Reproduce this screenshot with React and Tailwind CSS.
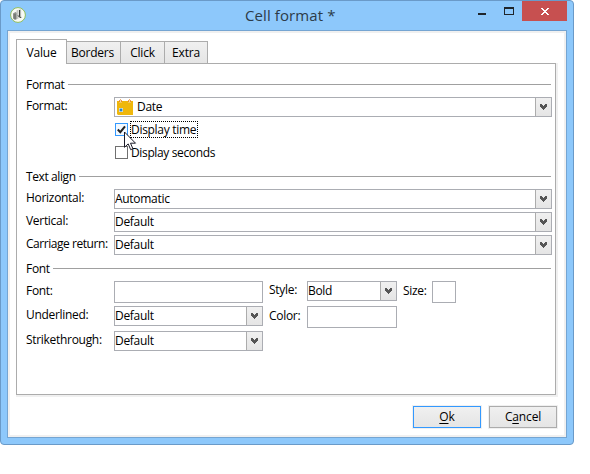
import React from "react";

function Chevron() {
  return (
    <svg width="7" height="6" viewBox="0 0 7 6" fill="#555" shapeRendering="crispEdges">
      <path d="M0 0h2v1h1v1h1v-1h1v-1h2v3h-1v1h-1v1h-1v1h-1v-1h-1v-1h-1v-1h-1z" />
    </svg>
  );
}

function Select({ value, icon, className }) {
  return (
    <div className={"flex h-5 shrink-0 border border-[#abadb3] bg-white " + className}>
      <div className="flex flex-1 items-center leading-[18px]">
        {icon}
        <span>{value}</span>
      </div>
      <div className="flex w-4 items-center justify-center border-l border-[#acacac] bg-linear-to-b from-[#f0f0f0] to-[#e5e5e5]">
        <Chevron />
      </div>
    </div>
  );
}

function Box({ className }) {
  return <div className={"h-[22px] shrink-0 border border-[#abadb3] bg-white " + className} />;
}

function Section({ title, className }) {
  return (
    <div className={"mr-1 flex h-[17px] items-center gap-[3px] " + className}>
      <span className="leading-[17px]">{title}</span>
      <div className="h-px flex-1 bg-[#a0a0a0]" />
    </div>
  );
}

function Label({ children, className = "" }) {
  return <div className={"w-[88px] shrink-0 whitespace-nowrap leading-[18px] " + className}>{children}</div>;
}

function DateIcon() {
  return (
    <svg className="ml-0.5 mr-1" width="16" height="16" viewBox="0 0 16 16">
      <path d="M0 2h16v14H1L0 15z" fill="#efb70c" />
      <path d="M2 1.2h3v2.3H2zM11 1.2h3v2.3h-3z" fill="#f7d9a0" />
      <path d="M2.5 3V1.5Q3.5-.2 4.5 1.5V3M11.5 3V1.5Q12.5-.2 13.5 1.5V3" fill="none" stroke="#e5882f" />
      <path d="M2 9h4v4H2z" fill="#d9e3df" />
      <path d="M2.7 9.7h2.6v2.6H2.7z" fill="#2585cf" />
    </svg>
  );
}

function AppIcon() {
  return (
    <svg width="16" height="16" viewBox="0 0 16 16">
      <circle cx="8" cy="8" r="7.4" fill="#f8faf5" stroke="#8fbd5a" />
      <path d="M3 6.5l2.5-1.5 1.5 1v6l-2 1-2-1.5z" fill="#8d908b" />
      <path d="M6.5 3.5l2-1v9l-2 .8z" fill="#c2c4c0" />
      <path d="M9.5 2.5h1.6v7.5H9.5z" fill="#b5b8b2" />
      <path d="M9.5 3v6.8M8 8.4l1.7 2h1.6" stroke="#3c403b" fill="none" />
      <path d="M5 7v5" stroke="#656965" />
    </svg>
  );
}

export default function App() {
  return (
    <div className="h-[474px] w-[590px] overflow-hidden bg-white font-['Open_Sans','Noto_Sans',sans-serif] text-[12px] tracking-[-0.3px] text-black">
      <div className="flex h-[445px] w-[574px] flex-col rounded-[4px] border border-[#6a9ac8] bg-[#8dc8fb] px-1.5 pb-1.5">
        <div className="flex h-[29px] shrink-0 items-start">
          <div className="ml-[3px] mt-1.5 w-4"><AppIcon /></div>
          <div className="ml-[219px] flex-1 whitespace-nowrap text-[15px] leading-[29px] tracking-[0.1px] text-[#2c3b48]">Cell format *</div>
          <div className="mr-[18px] mt-3 h-0.5 w-2 bg-[#1f252b]" />
          <div className="mr-2 mt-1.5 h-2 w-2.5 border border-t-2 border-[#1f252b]" />
          <div className="flex h-5 w-[45px] items-center justify-center bg-[#c75050]">
            <svg width="8" height="7" viewBox="0 0 8 7" fill="#fff" shapeRendering="crispEdges">
              <path d="M0 0h2v1h1v1h2v-1h1v-1h2v1h-1v1h-1v1h-1v1h1v1h1v1h1v1h-2v-1h-1v-1h-2v1h-1v1h-2v-1h1v-1h1v-1h1v-1h-1v-1h-1v-1h-1z" />
            </svg>
          </div>
        </div>

        <div className="flex flex-1 flex-col border border-[#75a5d2] bg-white">
          <div className="flex flex-1 flex-col border-2 border-[#f0f0f0] pl-1.5 pr-[7px] pt-1.5">
            <div className="z-10 -mb-px flex items-end tracking-[-0.2px]">
              <div className="flex h-[25px] w-[51px] justify-center border border-b-0 border-[#acacac] bg-white leading-[25px]">Value</div>
              <div className="-ml-px flex h-[23px] w-[55px] justify-center border border-[#acacac] bg-linear-to-b from-[#f0f0f0] to-[#e5e5e5] pr-0.5 leading-[21px]">Borders</div>
              <div className="flex h-[23px] w-11 justify-center border border-l-0 border-[#acacac] bg-linear-to-b from-[#f0f0f0] to-[#e5e5e5] leading-[21px]">Click</div>
              <div className="flex h-[23px] w-[43px] justify-center border border-l-0 border-[#acacac] bg-linear-to-b from-[#f0f0f0] to-[#e5e5e5] leading-[21px]">Extra</div>
            </div>

            <div className="h-[332px] w-[540px] shrink-0 border border-[#acacac] bg-white pl-[9px] shadow-[1px_1px_0_1px_#f0f0f0]">
              <Section title="Format" className="mt-3" />
              <div className="mt-1 flex h-5">
                <Label>Format:</Label>
                <Select value="Date" icon={<DateIcon />} className="w-[438px]" />
              </div>

              <div className="relative ml-[89px] mt-1 flex h-[17px] items-center">
                <div className="flex h-[13px] w-[13px] items-center justify-center border border-[#3399ff] bg-[#f3f9ff]">
                  <svg width="9" height="9" viewBox="0 0 9 9">
                    <path d="M.8 4.5l2.5 2.7L8 1.3" fill="none" stroke="#212121" strokeWidth="2" />
                  </svg>
                </div>
                <div className="ml-0.5 flex h-[17px] w-[68px] whitespace-nowrap border border-dotted border-black leading-[15px]">Display time</div>
                <svg className="absolute left-[9px] top-[10px]" width="13" height="20" viewBox="0 0 13 20">
                  <path d="M.5 1v15.3l3.7-3.4 2.5 5.8 2.2-1-2.4-5.5h5z" fill="#fff" stroke="#1b1b28" />
                </svg>
              </div>
              <div className="ml-[89px] mt-1.5 flex h-[17px] items-center">
                <div className="h-[13px] w-[13px] border border-[#707070] bg-white" />
                <div className="ml-[3px] leading-[17px] tracking-[-0.36px]">Display seconds</div>
              </div>

              <Section title="Text align" className="mt-[7px] tracking-[-0.4px]" />
              <div className="mt-1 flex h-5">
                <Label>Horizontal:</Label>
                <Select value="Automatic" className="w-[438px]" />
              </div>
              <div className="mt-[3px] flex h-5">
                <Label>Vertical:</Label>
                <Select value="Default" className="w-[438px]" />
              </div>
              <div className="mt-[3px] flex h-5">
                <Label className="tracking-[-0.45px]">Carriage return:</Label>
                <Select value="Default" className="w-[438px]" />
              </div>

              <Section title="Font" className="mt-[5px]" />
              <div className="mt-1 flex h-[22px]">
                <Label className="pt-px">Font:</Label>
                <Box className="w-[149px]" />
                <div className="ml-1.5 w-[38px] leading-[18px]">Style:</div>
                <Select value="Bold" className="w-[90px]" />
                <div className="ml-1.5 w-[29px] pt-px leading-[18px]">Size:</div>
                <Box className="w-6" />
              </div>
              <div className="mt-[3px] flex h-[22px]">
                <Label>Underlined:</Label>
                <Select value="Default" className="w-[149px]" />
                <div className="ml-1.5 w-[38px] pt-px leading-[18px]">Color:</div>
                <Box className="w-[90px]" />
              </div>
              <div className="mt-[3px] flex h-5">
                <Label>Strikethrough:</Label>
                <Select value="Default" className="w-[149px]" />
              </div>
            </div>

            <div className="mt-[11px] flex justify-end gap-2 tracking-[-0.15px]">
              <div className="flex h-[22px] w-[68px] justify-center border border-[#3399ff] bg-linear-to-b from-[#f0f0f0] to-[#e5e5e5] leading-5 shadow-[0_0_0_1px_#f0f0f0]">
                <span className="underline underline-offset-2">O</span>k
              </div>
              <div className="flex h-[22px] w-[68px] justify-center border border-[#acacac] bg-linear-to-b from-[#f0f0f0] to-[#e5e5e5] leading-5 shadow-[0_0_0_1px_#f0f0f0]">
                C<span className="underline underline-offset-2">a</span>ncel
              </div>
            </div>
          </div>
        </div>
      </div>
    </div>
  );
}
